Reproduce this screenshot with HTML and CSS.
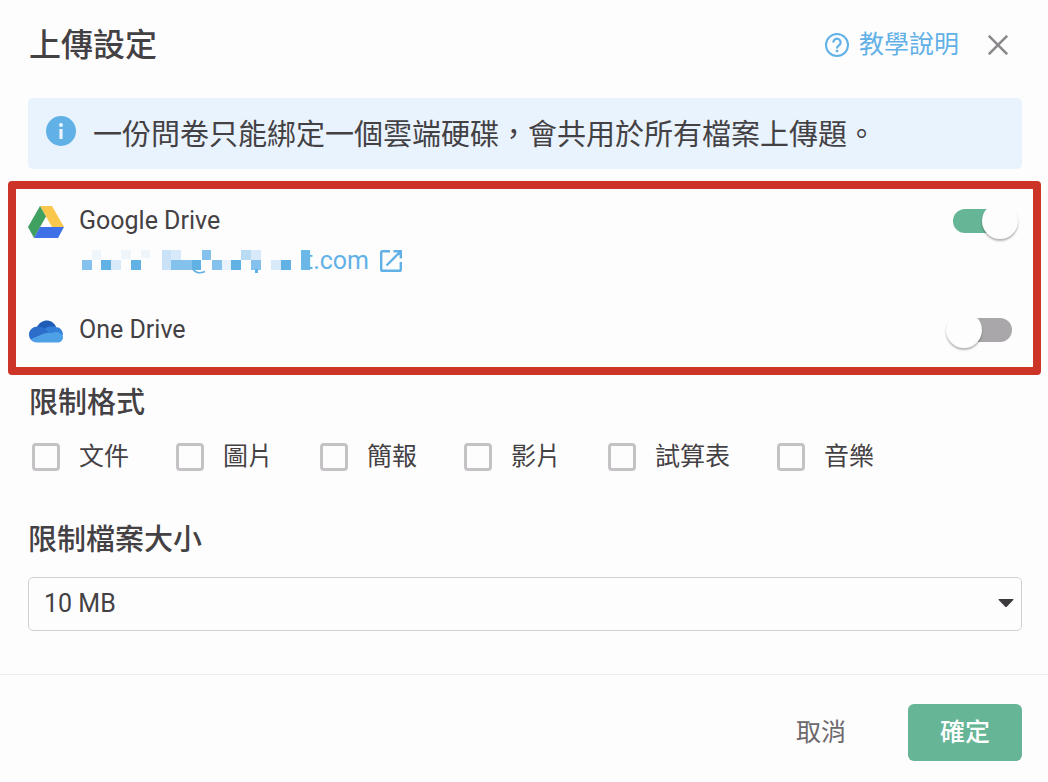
FILE: index.html
```html
<!DOCTYPE html>
<html lang="zh-Hant">
<head>
<meta charset="utf-8">
<meta name="viewport" content="width=device-width, initial-scale=1">
<title>上傳設定</title>
<link rel="stylesheet" href="styles.css">
</head>
<body>
<form class="dialog">
  <header class="dialog-header">
    <h1 class="dialog-title">上傳設定</h1>
    <a class="help-link" href="#help">
      <svg class="help-icon" viewBox="0 0 24 24" fill="none" stroke="currentColor" stroke-width="2" aria-hidden="true">
        <circle cx="12" cy="12" r="11"/>
        <path d="M8.400 9.600a3.600 3.600 0 1 1 5.900 2.500c-1.400 1.100-2.300 1.600-2.300 3.300" stroke-width="2.300"/>
        <path d="M12 16.800v2.400" stroke-width="2.500"/>
      </svg>
      教學說明
    </a>
    <button class="close-button" type="button" aria-label="關閉">
      <svg viewBox="0 0 20 20" fill="none" stroke="currentColor" stroke-width="2.600" aria-hidden="true"><path d="M.8.8l18.400 18.400M19.200.8L.8 19.200"/></svg>
    </button>
  </header>

  <main class="dialog-body">
    <p class="notice">
      <svg class="notice-icon" viewBox="0 0 30 30" aria-hidden="true">
        <circle cx="15" cy="15" r="15" fill="#62b1e6"/>
        <circle cx="15" cy="9" r="2" fill="#e8f3fd"/>
        <path d="M15 13v10" stroke="#e8f3fd" stroke-width="3.200"/>
      </svg>
      一份問卷只能綁定一個雲端硬碟，會共用於所有檔案上傳題。
    </p>

    <section class="drives">
      <div class="drive-row">
        <svg class="drive-icon" viewBox="0 0 36 36" aria-hidden="true">
          <path fill="#f9c74c" d="M12 3h12l12 21H24z"/>
          <path fill="#40a060" d="M12 3l6 10.500L6 35 0 24z"/>
          <path fill="#3e70e8" d="M12 24h24l-6 11H6z"/>
        </svg>
        <label class="drive-name" for="google-drive">Google Drive</label>
        <input class="switch" id="google-drive" type="checkbox" role="switch" checked>
      </div>
      <a class="account-link" href="#account">
        <svg class="account-mask" viewBox="82 249 229 26" aria-hidden="true">
          <g fill="#d8eafa">
            <path d="M93 251h9v10h-9zM122 251h10v9h-10zM142 251h9v8h-9z" opacity=".4"/>
            <path d="M112 261h10v10h-10zM172 251h10v10h-10zM252 251h10v10h-10zM272 261h10v10h-10z"/>
            <path d="M223 261h9v10h-9z" opacity=".6"/>
          </g>
          <path fill="#c9e2f7" d="M163 251h9v20h-9z"/>
          <path fill="#b9dcf4" d="M242 251h10v10h-10z"/>
          <path fill="#84c1ec" d="M83 261h10v10H83zM172 261h21v10h-21zM203 251h9v10h-9zM213 261h10v10h-10zM252 261h10v10h-10z"/>
          <path fill="#62b1e5" d="M102 261h10v10h-10zM132 261h10v10h-10zM193 261h9v10h-9zM232 261h10v10h-10zM282 261h10v10h-10zM256 270h3v4h-3z"/>
          <path fill="#6bb7e8" d="M302 251h9v20h-9z"/>
          <path d="M194 270c2 4 7 4.500 12 2.500" fill="none" stroke="#62b1e5" stroke-width="1.800"/>
        </svg>
        <span class="account-text">t.com</span>
        <svg class="open-icon" viewBox="0 0 22 22" fill="none" stroke="currentColor" stroke-width="2.400" aria-hidden="true">
          <path d="M10 1.200H2.600a1.400 1.400 0 0 0-1.400 1.400v16.800a1.400 1.400 0 0 0 1.400 1.400h16.800a1.400 1.400 0 0 0 1.400-1.400V12M13.500 1.200h7.300v7.300M20.500 1.500L6.500 15.500"/>
        </svg>
      </a>
      <div class="drive-row">
        <svg class="drive-icon" viewBox="0 0 36 36" aria-hidden="true">
          <path fill="#1e5cb8" d="M9 15C13 7 24 6 28 15l-3 8H12z"/>
          <path fill="#2a6dcb" d="M9 30C4 30 1 27 1 22.500 1 18 5 14.500 10 14.500c3 0 4.500.8 6.500 2L26 22 9 30z"/>
          <path fill="#337fd8" d="M16.500 16.500c3-2 7-2.500 10.500-1.500 5 0 8 3.500 8 8l-8 3z"/>
          <path fill="#4d9fe6" d="M3 27l13-5.500c3.500-1.400 7 0 10-1 2-.7 4-.5 6 .5 1.500.7 3 2 3 4 0 3.500-2.300 5.500-6 5.500H9c-3 0-5-1.200-6-3.500z"/>
        </svg>
        <label class="drive-name" for="one-drive">One Drive</label>
        <input class="switch" id="one-drive" type="checkbox" role="switch">
      </div>
    </section>

    <fieldset class="formats">
      <legend class="section-title">限制格式</legend>
      <div class="format-list">
        <label class="format"><input class="tick" type="checkbox">文件</label>
        <label class="format"><input class="tick" type="checkbox">圖片</label>
        <label class="format"><input class="tick" type="checkbox">簡報</label>
        <label class="format"><input class="tick" type="checkbox">影片</label>
        <label class="format"><input class="tick" type="checkbox">試算表</label>
        <label class="format"><input class="tick" type="checkbox">音樂</label>
      </div>
    </fieldset>

    <div class="size-field">
      <label class="section-title" for="size">限制檔案大小</label>
      <div class="select-box">
        <select class="size-select" id="size"><option>10 MB</option></select>
        <svg class="caret" viewBox="0 0 16 8" aria-hidden="true"><path fill="#3d3a3d" d="M1 0h14q1 0 .3 1L9 7.500q-1 1-2 0L.7 1Q0 0 1 0z"/></svg>
      </div>
    </div>
  </main>

  <footer class="dialog-footer">
    <button class="button" type="button">取消</button>
    <button class="button button-primary" type="submit">確定</button>
  </footer>
</form>
</body>
</html>
```
FILE: styles.css
```css
* {
  box-sizing: border-box;
}

body {
  margin: 0;
  background: #fefdfe;
  color: #444144;
  font: 25px/36px Roboto, "Noto Sans CJK TC", sans-serif;
}

.dialog-header {
  display: flex;
  align-items: center;
  padding: 21px 40px 29px 29px;
}

.dialog-title {
  margin: 0 auto 0 0;
  font-size: 32px;
  line-height: 48px;
  font-weight: 500;
}

.help-link,
.account-link {
  color: #62b1e6;
  text-decoration: none;
  display: flex;
  align-items: center;
}

.help-link {
  gap: 10px;
}

.help-icon {
  width: 24px;
  height: 24px;
}

.close-button {
  margin-left: 29px;
  padding: 0;
  border: 0;
  background: none;
  color: #8b888b;
  display: flex;
}

.close-button svg {
  width: 20px;
  height: 20px;
}

.notice {
  display: flex;
  align-items: flex-start;
  gap: 17px;
  margin: 0 26px 12px 28px;
  padding: 14px 18px 10px;
  border-radius: 5px;
  background: #e8f3fd;
  font-size: 29px;
  line-height: 47px;
}

.notice-icon {
  width: 30px;
  height: 30px;
  margin-top: 4px;
  flex: none;
}

.drives {
  margin: 0 7px 0 8px;
  padding: 14px 21px 19px 12px;
  border: 8px solid #cb3427;
  border-radius: 4px;
}

.drive-row {
  display: flex;
  align-items: center;
}

.drive-icon {
  width: 36px;
  height: 36px;
}

.drive-name {
  margin: 0 auto 0 15px;
}

.account-link {
  width: max-content;
  margin: 4px 0 33px 53px;
}

.account-mask {
  position: relative;
  width: 229px;
  height: 26px;
}

.account-text {
  margin: 0 11px 0 -5px;
}

.open-icon {
  width: 22px;
  height: 22px;
}

.switch {
  appearance: none;
  position: relative;
  width: 59px;
  height: 24px;
  margin: 0;
  border-radius: 12px;
  background: #a9a7a9;
}

.switch::before {
  content: "";
  position: absolute;
  top: -6px;
  left: -7px;
  width: 36px;
  height: 36px;
  border-radius: 50%;
  background: #fefdfe;
  box-shadow: 0 2px 2px rgba(0, 0, 0, .28);
}

.switch:checked {
  background: #66b596;
}

.switch:checked::before {
  left: 29px;
}

.formats {
  margin: 10px 26px 47px 29px;
  padding: 0;
  border: 0;
}

.section-title {
  display: block;
  padding: 0;
  font-size: 29px;
  line-height: 36px;
  font-weight: 500;
}

.format-list {
  display: flex;
  flex-wrap: wrap;
  gap: 12px 47px;
  margin: 18px 0 0 3px;
}

.format {
  display: flex;
  align-items: center;
  gap: 19px;
}

.tick {
  appearance: none;
  width: 28px;
  height: 28px;
  margin: 0;
  border: 3px solid #c5c2c5;
  border-radius: 4px;
}

.size-field {
  margin: 0 26px 43px 28px;
}

.select-box {
  position: relative;
  margin-top: 19px;
}

.size-select {
  appearance: none;
  display: block;
  width: 100%;
  height: 54px;
  padding: 0 40px 0 15px;
  border: 1px solid #d3d0d3;
  border-radius: 5px;
  background: none;
  color: inherit;
  font: inherit;
}

.caret {
  position: absolute;
  top: 22px;
  right: 8px;
  width: 16px;
  height: 8px;
  pointer-events: none;
}

.dialog-footer {
  display: flex;
  justify-content: flex-end;
  gap: 30px;
  padding: 29px 26px 21px;
  border-top: 1px solid #edebed;
}

.button {
  padding: 10px 32px;
  border: 0;
  border-radius: 6px;
  background: none;
  color: #6c696c;
  font: inherit;
  line-height: 37px;
}

.button-primary {
  background: #66b596;
  color: #fff;
  font-weight: 500;
}
```
